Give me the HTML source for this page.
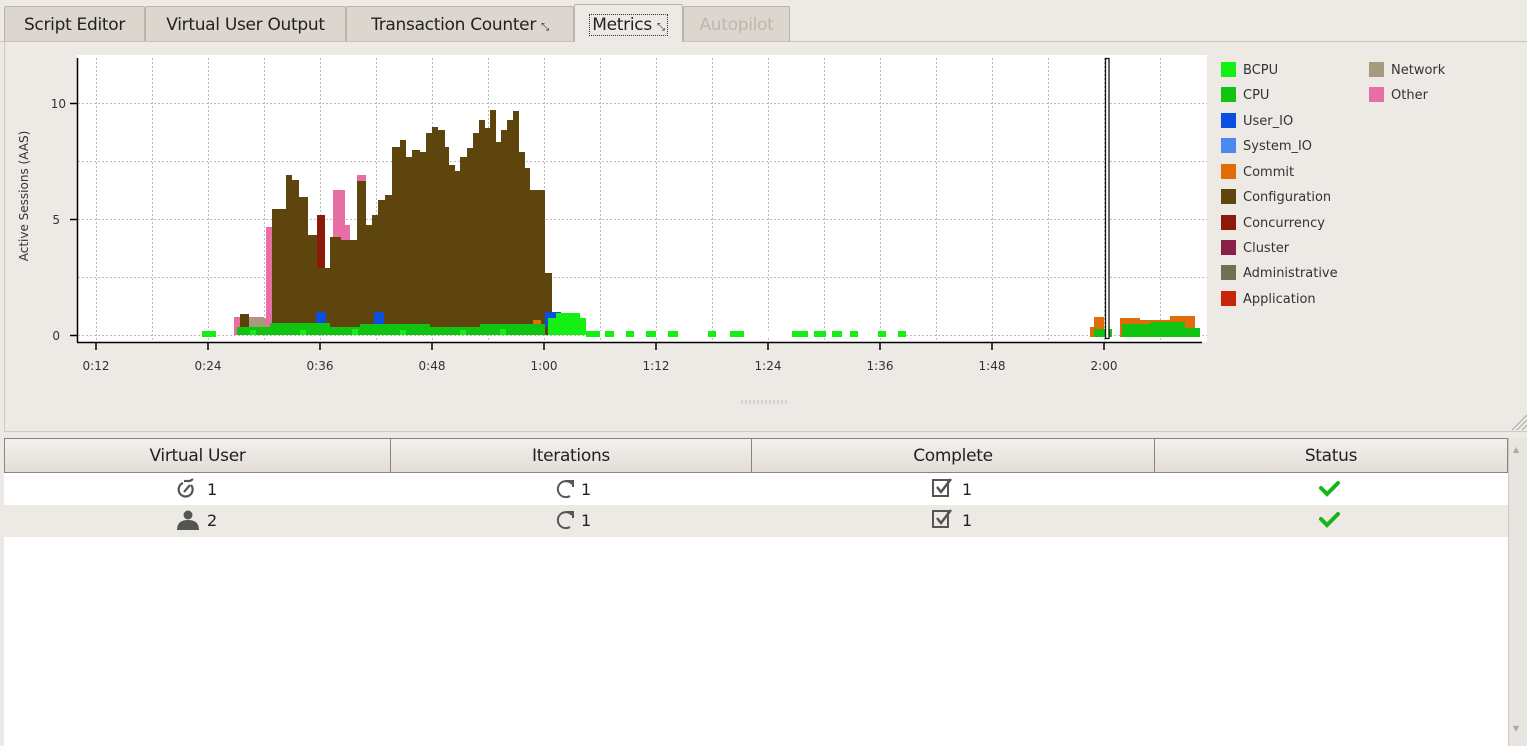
<!DOCTYPE html>
<html><head><meta charset="utf-8"><style>
*{margin:0;padding:0;box-sizing:border-box}
body{width:1527px;height:746px;overflow:hidden;background:#edeae6;font-family:"DejaVu Sans","Liberation Sans",sans-serif;color:#222;position:relative}
.tab{position:absolute;top:6px;height:35px;border:1px solid #b9b2aa;border-bottom:none;background:#dcd6cf;font-size:17px;line-height:37px;text-align:center;border-radius:2px 2px 0 0;letter-spacing:-0.3px}
.hdr{position:absolute;top:438px;height:35px;background:linear-gradient(#f3f1ee,#e2ddd7);border:1px solid #8a847c;font-size:17px;line-height:34px;text-align:center;letter-spacing:-0.3px}
.cell{position:absolute;font-size:16px;line-height:31px;text-align:center}
</style></head><body>
<div style="position:absolute;left:0;top:41px;width:1527px;height:1px;background:#c8c2ba"></div>
<div class="tab" style="left:4px;width:141px">Script Editor</div>
<div class="tab" style="left:145px;width:201px">Virtual User Output</div>
<div class="tab" style="left:346px;width:228px">Transaction Counter <span style="font-size:10px">⤡</span></div>
<div class="tab" style="left:574px;width:109px;top:4px;height:38px;background:#edeae6;line-height:40px"><span style="border:1px dotted #333;padding:0 2px">Metrics <span style="font-size:10px">⤡</span></span></div>
<div class="tab" style="left:683px;width:107px;color:#bdb7b0">Autopilot</div>
<div style="position:absolute;left:4px;top:42px;width:1523px;height:390px;border-left:1px solid #d0cac2;border-bottom:1px solid #cfc9c1"></div>

<svg width="1527" height="432" style="position:absolute;left:0;top:0" font-family="DejaVu Sans, Liberation Sans, sans-serif">
<rect x="77" y="55" width="1130" height="287" fill="#fff"/>
<g stroke="#bbb" stroke-dasharray="2,2" stroke-width="1">
<line x1="78" x2="1207" y1="103.5" y2="103.5"/><line x1="78" x2="1207" y1="161.5" y2="161.5"/>
<line x1="78" x2="1207" y1="219.5" y2="219.5"/><line x1="78" x2="1207" y1="277.5" y2="277.5"/>
<line x1="78" x2="1207" y1="335.5" y2="335.5"/>
<line x1="96.5" x2="96.5" y1="58" y2="340"/><line x1="152.5" x2="152.5" y1="58" y2="340"/>
<line x1="208.5" x2="208.5" y1="58" y2="340"/><line x1="264.5" x2="264.5" y1="58" y2="340"/>
<line x1="320.5" x2="320.5" y1="58" y2="340"/><line x1="376.5" x2="376.5" y1="58" y2="340"/>
<line x1="432.5" x2="432.5" y1="58" y2="340"/><line x1="488.5" x2="488.5" y1="58" y2="340"/>
<line x1="544.5" x2="544.5" y1="58" y2="340"/><line x1="600.5" x2="600.5" y1="58" y2="340"/>
<line x1="656.5" x2="656.5" y1="58" y2="340"/><line x1="712.5" x2="712.5" y1="58" y2="340"/>
<line x1="768.5" x2="768.5" y1="58" y2="340"/><line x1="824.5" x2="824.5" y1="58" y2="340"/>
<line x1="880.5" x2="880.5" y1="58" y2="340"/><line x1="936.5" x2="936.5" y1="58" y2="340"/>
<line x1="992.5" x2="992.5" y1="58" y2="340"/><line x1="1048.5" x2="1048.5" y1="58" y2="340"/>
<line x1="1104.5" x2="1104.5" y1="58" y2="340"/><line x1="1160.5" x2="1160.5" y1="58" y2="340"/>
</g>
<rect x="266" y="227" width="8" height="108" fill="#e86fa6"/>
<path d="M333,335 V190 H345 V225 H350 V335 Z" fill="#e86fa6"/>
<rect x="357" y="175" width="9" height="160" fill="#e86fa6"/>
<rect x="234" y="317" width="30" height="18" fill="#e86fa6"/>
<rect x="248" y="318" width="18" height="17" fill="#a89a7c"/>
<rect x="240" y="314" width="9" height="21" fill="#5a4209"/>
<rect x="317" y="215" width="8" height="120" fill="#8b1a0a"/>
<path d="M272,335 V209 H286 V175 H292 V180 H299 V197 H308 V235 H317 V268 H330 V237 H341 V240 H349 V240 H357 V181 H366 V225 H372 V215 H378 V200 H385 V195 H392 V147 H400 V140 H406 V157 H412 V150 H420 V152 H426 V133 H432 V127 H438 V130 H445 V147 H449 V165 H455 V171 H460 V157 H467 V148 H473 V133 H479 V120 H485 V128 H490 V110 H496 V142 H501 V130 H507 V120 H513 V111 H519 V152 H525 V168 H530 V190 H545 V273 H552 V335 Z" fill="#5e450d"/>
<rect x="316" y="312" width="10" height="15" fill="#0b4ee0"/>
<rect x="374" y="312" width="10" height="18" fill="#0b4ee0"/>
<rect x="545" y="312" width="16" height="15" fill="#0b4ee0"/>
<rect x="533" y="320" width="8" height="10" fill="#e06c0a"/>
<path d="M237,335 V327 H270 V323 H330 V327 H360 V324 H430 V327 H480 V324 H545 V335 Z" fill="#12c412"/>
<g fill="#14f014"><rect x="250" y="330" width="6" height="5"/><rect x="300" y="330" width="6" height="5"/><rect x="352" y="329" width="6" height="6"/><rect x="400" y="330" width="6" height="5"/><rect x="460" y="330" width="6" height="5"/><rect x="500" y="329" width="6" height="6"/></g>
<path d="M548,335 V318 H556 V313 H580 V318 H586 V335 Z" fill="#14f014"/>
<rect x="202" y="331" width="14" height="6" fill="#14f014"/>
<rect x="586" y="331" width="320" height="6" fill="#14f014"/>
<g fill="#fff"><rect x="600" y="331" width="5" height="6"/><rect x="614" y="331" width="12" height="6"/><rect x="634" y="331" width="12" height="6"/><rect x="656" y="331" width="12" height="6"/><rect x="678" y="331" width="30" height="6"/><rect x="716" y="331" width="14" height="6"/><rect x="744" y="331" width="48" height="6"/><rect x="808" y="331" width="6" height="6"/><rect x="826" y="331" width="6" height="6"/><rect x="842" y="331" width="8" height="6"/><rect x="858" y="331" width="20" height="6"/><rect x="886" y="331" width="12" height="6"/></g>
<path d="M1090,337 V327 H1094 V317 H1104 V337 Z" fill="#e06c0a"/>
<path d="M1120,337 V318 H1140 V320 H1170 V316 H1195 V337 Z" fill="#e06c0a"/>
<path d="M1094,337 V329 H1112 V337 Z" fill="#12c412"/>
<path d="M1122,337 V324 H1150 V322 H1185 V328 H1200 V337 Z" fill="#12c412"/>
<rect x="1105.5" y="58.5" width="3.5" height="280" fill="#fff" stroke="#111" stroke-width="1.3"/>
<line x1="77.5" x2="77.5" y1="58" y2="342" stroke="#000" stroke-width="1.5"/>
<line x1="77" x2="1202" y1="342.5" y2="342.5" stroke="#000" stroke-width="1.5"/>
<g stroke="#000" stroke-width="1.5"><line x1="70" x2="77" y1="103.5" y2="103.5"/><line x1="70" x2="77" y1="219.5" y2="219.5"/><line x1="70" x2="77" y1="335.5" y2="335.5"/>
<line x1="96" x2="96" y1="342" y2="350"/><line x1="208" x2="208" y1="342" y2="350"/><line x1="320" x2="320" y1="342" y2="350"/><line x1="432" x2="432" y1="342" y2="350"/><line x1="544" x2="544" y1="342" y2="350"/><line x1="656" x2="656" y1="342" y2="350"/><line x1="768" x2="768" y1="342" y2="350"/><line x1="880" x2="880" y1="342" y2="350"/><line x1="992" x2="992" y1="342" y2="350"/><line x1="1104" x2="1104" y1="342" y2="350"/></g>
<g font-size="12" fill="#333" text-anchor="end"><text x="66" y="108">10</text><text x="60" y="224">5</text><text x="60" y="340">0</text></g>
<g font-size="12" fill="#333" text-anchor="middle"><text x="96" y="370">0:12</text><text x="208" y="370">0:24</text><text x="320" y="370">0:36</text><text x="432" y="370">0:48</text><text x="544" y="370">1:00</text><text x="656" y="370">1:12</text><text x="768" y="370">1:24</text><text x="880" y="370">1:36</text><text x="992" y="370">1:48</text><text x="1104" y="370">2:00</text></g>
<text transform="translate(28,196) rotate(-90)" font-size="12" fill="#333" text-anchor="middle">Active Sessions (AAS)</text>
<g font-size="13" fill="#333">
<rect x="1221" y="62" width="15" height="15" fill="#14f014"/><text x="1243" y="74">BCPU</text>
<rect x="1221" y="87" width="15" height="15" fill="#12c412"/><text x="1243" y="99">CPU</text>
<rect x="1221" y="113" width="15" height="15" fill="#0b4ee0"/><text x="1243" y="125">User_IO</text>
<rect x="1221" y="138" width="15" height="15" fill="#4a87f0"/><text x="1243" y="150">System_IO</text>
<rect x="1221" y="164" width="15" height="15" fill="#e06c0a"/><text x="1243" y="176">Commit</text>
<rect x="1221" y="189" width="15" height="15" fill="#5e450d"/><text x="1243" y="201">Configuration</text>
<rect x="1221" y="215" width="15" height="15" fill="#8b1a0a"/><text x="1243" y="227">Concurrency</text>
<rect x="1221" y="240" width="15" height="15" fill="#8a1f4a"/><text x="1243" y="252">Cluster</text>
<rect x="1221" y="265" width="15" height="15" fill="#717054"/><text x="1243" y="277">Administrative</text>
<rect x="1221" y="291" width="15" height="15" fill="#c8260a"/><text x="1243" y="303">Application</text>
<rect x="1369" y="62" width="15" height="15" fill="#a89a7c"/><text x="1391" y="74">Network</text>
<rect x="1369" y="87" width="15" height="15" fill="#e86fa6"/><text x="1391" y="99">Other</text>
</g>
<g stroke="#bbb"><line x1="742" x2="742" y1="400" y2="404"/><line x1="746" x2="746" y1="400" y2="404"/><line x1="750" x2="750" y1="400" y2="404"/><line x1="754" x2="754" y1="400" y2="404"/><line x1="758" x2="758" y1="400" y2="404"/><line x1="762" x2="762" y1="400" y2="404"/><line x1="766" x2="766" y1="400" y2="404"/><line x1="770" x2="770" y1="400" y2="404"/><line x1="774" x2="774" y1="400" y2="404"/><line x1="778" x2="778" y1="400" y2="404"/><line x1="782" x2="782" y1="400" y2="404"/><line x1="786" x2="786" y1="400" y2="404"/></g>
<g stroke="#aaa"><line x1="1512" y1="430" x2="1527" y2="415"/><line x1="1517" y1="430" x2="1527" y2="420"/><line x1="1522" y1="430" x2="1527" y2="425"/></g>
</svg>

<div style="position:absolute;left:4px;top:473px;width:1504px;height:273px;background:#fff"></div>
<div style="position:absolute;left:4px;top:505px;width:1504px;height:32px;background:#edeae6"></div>
<div class="hdr" style="left:4px;width:387px">Virtual User</div>
<div class="hdr" style="left:390px;width:362px">Iterations</div>
<div class="hdr" style="left:751px;width:404px">Complete</div>
<div class="hdr" style="left:1154px;width:354px">Status</div>
<div style="position:absolute;left:1508px;top:438px;width:19px;height:308px;background:#e8e4df;border-left:1px solid #cfc9c1"></div>
<div style="position:absolute;left:1513px;top:445px;font-size:8px;color:#aaa">▲</div>
<div style="position:absolute;left:1513px;top:724px;font-size:8px;color:#aaa">▼</div>

<svg width="1527" height="746" style="position:absolute;left:0;top:0">
<g fill="none" stroke="#555" stroke-width="2.2"><path d="M183,483 A7,7 0 1 0 191,485"/><path d="M184,481 L190,481 L193,479"/><path d="M184,492 L190,485"/></g>
<circle cx="188" cy="515" r="4.5" fill="#555"/><path d="M177,530 Q177,520 188,520 Q199,520 199,530 Z" fill="#555"/>
<g fill="none" stroke="#555" stroke-width="2"><path d="M572,484 A8,8 0 1 0 570,496"/><path d="M566,481 L573,481 L573,487"/><path d="M572,515 A8,8 0 1 0 570,527"/><path d="M566,512 L573,512 L573,518"/></g>
<g fill="none" stroke="#555" stroke-width="2"><rect x="933" y="480" width="15" height="16"/><rect x="933" y="511" width="15" height="16"/></g>
<g fill="none" stroke="#555" stroke-width="2.5"><path d="M937,487 L941,492 L951,479"/><path d="M937,518 L941,523 L951,510"/></g>
<g fill="none" stroke="#18b418" stroke-width="4" stroke-linecap="round"><path d="M1321,488 L1327,494 L1338,483"/><path d="M1321,519 L1327,525 L1338,514"/></g>
</svg>
<div class="cell" style="left:207px;top:474px">1</div>
<div class="cell" style="left:207px;top:505px">2</div>
<div class="cell" style="left:581px;top:474px">1</div>
<div class="cell" style="left:581px;top:505px">1</div>
<div class="cell" style="left:962px;top:474px">1</div>
<div class="cell" style="left:962px;top:505px">1</div>
</body></html>
